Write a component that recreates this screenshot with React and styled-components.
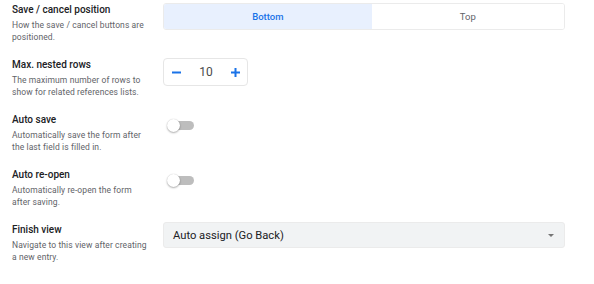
import React from "react";
import styled, { createGlobalStyle } from "styled-components";

const Global = createGlobalStyle`
  html, body { margin: 0; padding: 0; background: #fff; }
  body { font-family: Roboto, "Noto Sans", sans-serif; -webkit-font-smoothing: antialiased; }
`;

const Page = styled.div`
  width: 594px;
  height: 284px;
  box-sizing: border-box;
  padding: 3px 29px 0 12px;
  display: flex;
  flex-direction: column;
  gap: 16px;
`;

const Row = styled.div`
  display: flex;
  align-items: flex-start;
  gap: 13px;
`;

const Label = styled.div`
  width: 138px;
  flex: none;
  height: 39px;
`;

const Title = styled.div`
  font-size: 10px;
  line-height: 13px;
  font-weight: 500;
  color: #202124;
`;

const Desc = styled.div`
  margin-top: 3px;
  font-size: 8.5px;
  line-height: 12px;
  letter-spacing: 0.1px;
  color: #5f6368;
`;

const Control = styled.div`
  flex: 1;
  display: flex;
  padding-top: ${(p) => p.$offset || 0}px;
`;

const Segmented = styled.div`
  flex: 1;
  display: flex;
  height: 27px;
  box-sizing: border-box;
  border: 1px solid #ebebeb;
  border-radius: 3px;
  overflow: hidden;
`;

const Segment = styled.div`
  flex: 1 1 auto;
  display: flex;
  align-items: center;
  justify-content: center;
  font-size: 9.5px;
  font-weight: ${(p) => (p.$active ? 500 : 400)};
  color: ${(p) => (p.$active ? "#1a73e8" : "#5f6368")};
  background: ${(p) => (p.$active ? "#e8f0fe" : "#fff")};
`;

const Stepper = styled.div`
  width: 85px;
  height: 28px;
  box-sizing: border-box;
  border: 1px solid #e6e6e6;
  border-radius: 4px;
  display: flex;
  align-items: center;
  justify-content: space-between;
  padding: 0 7px 0 8px;
`;

const StepBtn = styled.div`
  width: 9px;
  height: 9px;
  display: flex;
  align-items: center;
  justify-content: center;
`;

const StepValue = styled.div`
  font-size: 12px;
  color: #4a4a4a;
`;

const Switch = styled.div`
  position: relative;
  width: 28px;
  height: 13px;
  margin-left: 4px;
`;

const Track = styled.div`
  position: absolute;
  left: 3px;
  top: 2px;
  width: 24px;
  height: 9px;
  border-radius: 5px;
  background: #bdbdbd;
`;

const Knob = styled.div`
  position: absolute;
  left: 0;
  top: 0;
  width: 13px;
  height: 13px;
  border-radius: 50%;
  background: #fff;
  box-shadow: 0 1px 2px rgba(0, 0, 0, 0.3), 0 0 1px rgba(0, 0, 0, 0.2);
`;

const Select = styled.div`
  flex: 1;
  height: 26px;
  box-sizing: border-box;
  margin-top: -1px;
  background: #f1f3f4;
  border: 1px solid #ebebeb;
  border-radius: 3px;
  display: flex;
  align-items: center;
  justify-content: space-between;
  padding: 0 9px 0 9px;
  font-size: 11.2px;
  color: #202124;
`;

const Caret = styled.div`
  width: 0;
  height: 0;
  border-left: 3.5px solid transparent;
  border-right: 3.5px solid transparent;
  border-top: 3.5px solid #757575;
  margin-right: 1px;
`;

const Minus = () => (
  <svg width="9" height="9" viewBox="0 0 9 9">
    <rect x="0" y="3.5" width="9" height="2" fill="#1a73e8" />
  </svg>
);
const Plus = () => (
  <svg width="9" height="9" viewBox="0 0 9 9">
    <rect x="0" y="3.5" width="9" height="2" fill="#1a73e8" />
    <rect x="3.5" y="0" width="2" height="9" fill="#1a73e8" />
  </svg>
);

const Toggle = () => (
  <Switch>
    <Track />
    <Knob />
  </Switch>
);

export default function App() {
  return (
    <>
      <Global />
      <Page>
        <Row>
          <Label>
            <Title>Save / cancel position</Title>
            <Desc>How the save / cancel buttons are positioned.</Desc>
          </Label>
          <Control>
            <Segmented>
              <Segment $active>Bottom</Segment>
              <Segment>Top</Segment>
            </Segmented>
          </Control>
        </Row>
        <Row>
          <Label>
            <Title>Max. nested rows</Title>
            <Desc>The maximum number of rows to show for related references lists.</Desc>
          </Label>
          <Control>
            <Stepper>
              <StepBtn><Minus /></StepBtn>
              <StepValue>10</StepValue>
              <StepBtn><Plus /></StepBtn>
            </Stepper>
          </Control>
        </Row>
        <Row>
          <Label>
            <Title>Auto save</Title>
            <Desc>Automatically save the form after the last field is filled in.</Desc>
          </Label>
          <Control $offset={6}>
            <Toggle />
          </Control>
        </Row>
        <Row>
          <Label>
            <Title>Auto re-open</Title>
            <Desc>Automatically re-open the form after saving.</Desc>
          </Label>
          <Control $offset={6}>
            <Toggle />
          </Control>
        </Row>
        <Row>
          <Label>
            <Title>Finish view</Title>
            <Desc>Navigate to this view after creating a new entry.</Desc>
          </Label>
          <Control>
            <Select>
              <span>Auto assign (Go Back)</span>
              <Caret />
            </Select>
          </Control>
        </Row>
      </Page>
    </>
  );
}
